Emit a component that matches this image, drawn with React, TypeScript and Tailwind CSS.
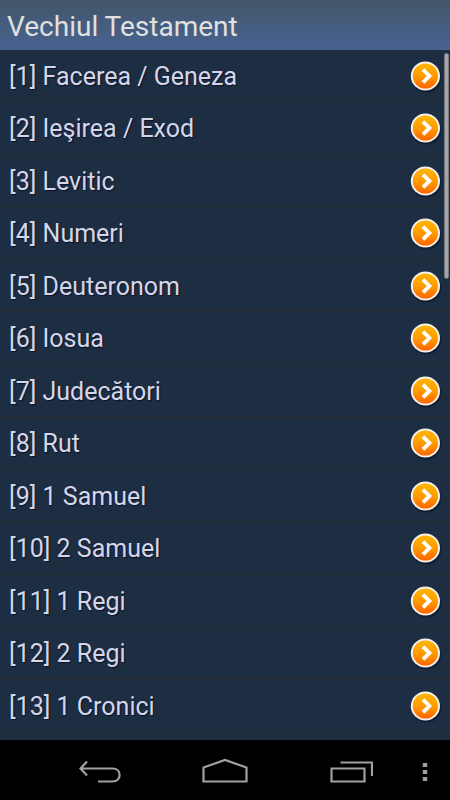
const books = [
  "Facerea / Geneza",
  "Ieşirea / Exod",
  "Levitic",
  "Numeri",
  "Deuteronom",
  "Iosua",
  "Judecători",
  "Rut",
  "1 Samuel",
  "2 Samuel",
  "1 Regi",
  "2 Regi",
  "1 Cronici",
];

function ArrowBadge() {
  return (
    <svg width="34" height="34" viewBox="0 0 34 34" className="shrink-0" aria-hidden="true">
      <circle cx="18.5" cy="19" r="14.8" fill="#0b1526" opacity="0.35" />
      <circle cx="18" cy="18.2" r="14.8" fill="#0b1526" opacity="0.45" />
      <circle cx="17.4" cy="17" r="14.6" fill="#f6f1ea" />
      <circle cx="17.4" cy="17" r="12.6" fill="url(#badge-fill)" />
      <path d="M15 10.6 21.4 17 15 23.4" fill="none" stroke="#fff" strokeWidth="3.8" />
    </svg>
  );
}

function BookRow({ index, name }: { index: number; name: string }) {
  return (
    <li className="h-[52px] border-b border-[#23282e] even:h-[53px]">
      <button type="button" className="flex h-full w-full items-center justify-between pr-2 pl-[9px] text-left">
        <span className="pt-[2px] text-[25px] leading-8 text-[#d6d6ea] [text-shadow:1px_1px_1px_#0a1428]">
          [{index}] {name}
        </span>
        <ArrowBadge />
      </button>
    </li>
  );
}

function NavigationBar() {
  return (
    <nav className="flex h-[60px] shrink-0 bg-black pt-1 text-[#a0a0a0]">
      <div className="w-[38px] shrink-0" />
      <button type="button" aria-label="Back" className="flex flex-1 items-center justify-center">
        <svg width="44" height="28" viewBox="0 0 44 28" fill="none" stroke="currentColor" strokeWidth="2.2">
          <path d="M9 3.5 2.5 10.5 9 17.5M2.5 10.5H34.5C44 10.5 44 23.5 34.5 23.5H20" />
        </svg>
      </button>
      <button type="button" aria-label="Home" className="flex flex-1 items-center justify-center">
        <svg width="48" height="28" viewBox="0 0 48 28" fill="none" stroke="currentColor" strokeWidth="2.2">
          <path d="M2.5 9.5 24 2 45.5 9.5V23.5H2.5Z" />
        </svg>
      </button>
      <button type="button" aria-label="Recent apps" className="flex flex-1 items-center justify-center">
        <svg width="46" height="28" viewBox="0 0 46 28" fill="none" stroke="currentColor" strokeWidth="2.2">
          <path d="M4.5 10.5H37.5V23.5H4.5ZM13.5 4.5H45V18" />
        </svg>
      </button>
      <button type="button" aria-label="Menu" className="flex w-[38px] shrink-0 items-center justify-center pr-3">
        <svg width="6" height="20" viewBox="0 0 6 20" fill="currentColor">
          <path d="M.8 1h4.4v4h-4.4ZM.8 8h4.4v4h-4.4ZM.8 15h4.4v4h-4.4Z" />
        </svg>
      </button>
    </nav>
  );
}

export default function App() {
  return (
    <div className="flex h-screen flex-col bg-[#1d2d42] font-[Roboto,sans-serif]">
      <svg width="0" height="0" className="absolute" aria-hidden="true">
        <defs>
          <linearGradient id="badge-fill" x1="0" y1="0" x2="0" y2="1">
            <stop offset="0" stopColor="#ffb400" />
            <stop offset="0.5" stopColor="#ff9d00" />
            <stop offset="1" stopColor="#ff6400" />
          </linearGradient>
        </defs>
      </svg>
      <header className="flex h-[50px] shrink-0 items-center bg-linear-to-b from-[#425669] to-[#486392] px-[7px] pt-[3px]">
        <h1 className="text-[28px] leading-8 text-[#e0e0e0]">Vechiul Testament</h1>
      </header>
      <main className="relative min-h-0 flex-1 overflow-hidden">
        <ul>
          {books.map((name, i) => (
            <BookRow key={name} index={i + 1} name={name} />
          ))}
        </ul>
        <div className="absolute top-[3px] right-px h-[226px] w-[5px] rounded-full border border-[#777b80] bg-[#a3a5a8]" />
      </main>
      <NavigationBar />
    </div>
  );
}
